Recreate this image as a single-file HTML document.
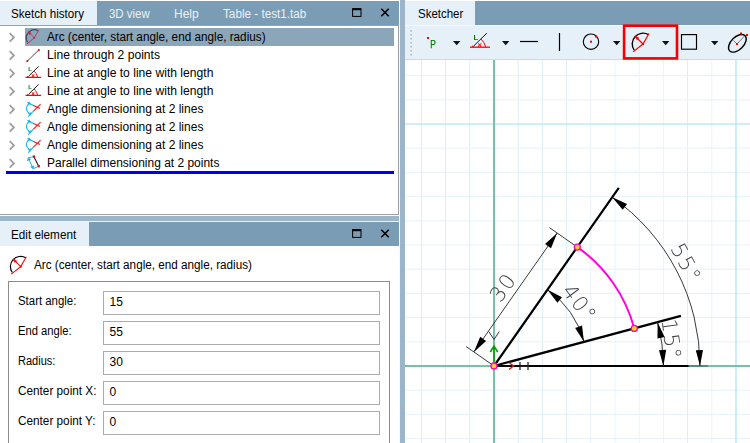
<!DOCTYPE html>
<html><head><meta charset="utf-8"><title>Sketcher</title>
<style>
html,body{margin:0;padding:0;}
body{width:750px;height:443px;overflow:hidden;position:relative;background:#fff;font-family:"Liberation Sans",sans-serif;font-size:12px;color:#000;}
.abs{position:absolute;}
.t{position:absolute;white-space:nowrap;line-height:14px;transform-origin:0 0;}
svg{position:absolute;left:0;top:0;overflow:visible;will-change:transform}
.inp{position:absolute;left:103px;width:277px;height:24px;box-sizing:border-box;border:1px solid #ababab;background:#fff}
</style></head><body>
<div class="abs" style="left:0;top:0;width:405px;height:443px;background:#9db5c8"></div>
<div class="abs" style="left:0;top:0;width:399px;height:25px;background:#7a9cb4"></div>
<div class="abs" style="left:0;top:0;width:399px;height:1px;background:#fdfeff"></div>
<div class="abs" style="left:0;top:1px;width:97px;height:24px;background:#e6f0f9"></div>
<div class="abs" style="left:0;top:25px;width:399px;height:190px;background:#fff;box-sizing:border-box;border-right:1px solid #a0a0a0;border-bottom:1px solid #a0a0a0;border-top:1px solid #a0a0a0"></div>
<div class="abs" style="left:25px;top:28px;width:369px;height:18px;background:#8ba5b9"></div>
<div class="abs" style="left:6px;top:171px;width:388px;height:3px;background:#0000e6"></div>
<div class="t" style="left:11px;top:6.5px;color:#000;font-size:12px;transform:scaleX(0.9682);">Sketch history</div>
<div class="t" style="left:109.3px;top:6.5px;color:#eaf1f6;font-size:12px;transform:scaleX(0.9532);">3D view</div>
<div class="t" style="left:174px;top:6.5px;color:#eaf1f6;font-size:12px;">Help</div>
<div class="t" style="left:223.3px;top:6.5px;color:#eaf1f6;font-size:12px;transform:scaleX(0.9766);">Table - test1.tab</div>
<div class="t" style="left:47.0px;top:30.0px;color:#000;font-size:12px;transform:scaleX(0.9781);">Arc (center, start angle, end angle, radius)</div>
<div class="t" style="left:47.0px;top:48.0px;color:#000;font-size:12px;transform:scaleX(1.0080);">Line through 2 points</div>
<div class="t" style="left:47.0px;top:66.0px;color:#000;font-size:12px;transform:scaleX(1.0097);">Line at angle to line with length</div>
<div class="t" style="left:47.0px;top:84.0px;color:#000;font-size:12px;transform:scaleX(1.0097);">Line at angle to line with length</div>
<div class="t" style="left:47.0px;top:102.0px;color:#000;font-size:12px;transform:scaleX(1.0019);">Angle dimensioning at 2 lines</div>
<div class="t" style="left:47.0px;top:120.0px;color:#000;font-size:12px;transform:scaleX(1.0019);">Angle dimensioning at 2 lines</div>
<div class="t" style="left:47.0px;top:138.0px;color:#000;font-size:12px;transform:scaleX(1.0019);">Angle dimensioning at 2 lines</div>
<div class="t" style="left:47.0px;top:156.0px;color:#000;font-size:12px;transform:scaleX(0.9977);">Parallel dimensioning at 2 points</div>
<div class="abs" style="left:0;top:221px;width:399px;height:1px;background:#eef3f7"></div>
<div class="abs" style="left:0;top:222px;width:399px;height:24px;background:#7a9cb4"></div>
<div class="abs" style="left:0;top:222px;width:89px;height:24px;background:#e6f0f9"></div>
<div class="abs" style="left:0;top:246px;width:399px;height:197px;background:#fff"></div>
<div class="abs" style="left:8px;top:281px;width:382px;height:170px;box-sizing:border-box;border:1px solid #8c8c8c"></div>
<div class="t" style="left:11px;top:227.5px;color:#000;font-size:12px;transform:scaleX(0.9775);">Edit element</div>
<div class="t" style="left:34.3px;top:257.5px;color:#000;font-size:12px;transform:scaleX(0.9754);">Arc (center, start angle, end angle, radius)</div>
<div class="inp" style="top:291px"></div>
<div class="t" style="left:18.3px;top:293.6px;color:#000;font-size:12px;transform:scaleX(0.9511);">Start angle:</div>
<div class="t" style="left:109.6px;top:295.4px;color:#000;font-size:12px;">15</div>
<div class="inp" style="top:321px"></div>
<div class="t" style="left:18.3px;top:323.6px;color:#000;font-size:12px;transform:scaleX(0.9355);">End angle:</div>
<div class="t" style="left:109.6px;top:325.4px;color:#000;font-size:12px;">55</div>
<div class="inp" style="top:351px"></div>
<div class="t" style="left:18.3px;top:353.6px;color:#000;font-size:12px;transform:scaleX(0.9189);">Radius:</div>
<div class="t" style="left:109.6px;top:355.4px;color:#000;font-size:12px;">30</div>
<div class="inp" style="top:381px"></div>
<div class="t" style="left:18.3px;top:383.6px;color:#000;font-size:12px;transform:scaleX(0.9800);">Center point X:</div>
<div class="t" style="left:109.6px;top:385.4px;color:#000;font-size:12px;">0</div>
<div class="inp" style="top:411px"></div>
<div class="t" style="left:18.3px;top:413.6px;color:#000;font-size:12px;transform:scaleX(0.9800);">Center point Y:</div>
<div class="t" style="left:109.6px;top:415.4px;color:#000;font-size:12px;">0</div>
<div class="abs" style="left:399px;top:0;width:1px;height:443px;background:#f6f9fc"></div>
<div class="abs" style="left:0;top:215px;width:400px;height:1px;background:#f6f9fc"></div>
<div class="abs" style="left:405px;top:0;width:345px;height:443px;background:#fff"></div>
<div class="abs" style="left:405px;top:0;width:345px;height:25px;background:#7a9cb4"></div>
<div class="abs" style="left:405px;top:0;width:345px;height:1px;background:#fdfeff"></div>
<div class="abs" style="left:405px;top:1px;width:70px;height:24px;background:#e6f0f9"></div>
<div class="abs" style="left:405px;top:25px;width:345px;height:35px;background:#e6f0f9;box-sizing:border-box;border-bottom:1px solid #cfd9e2"></div>
<div class="abs" style="left:405px;top:25px;width:345px;height:1px;background:#f3f8fc"></div>
<div class="t" style="left:417.7px;top:6.5px;color:#000;font-size:12px;transform:scaleX(0.9557);">Sketcher</div>
<svg width="750" height="443" viewBox="0 0 750 443">
<rect x="352.6" y="8.6" width="8.4" height="7.8" fill="none" stroke="#000" stroke-width="1"/><rect x="352.6" y="8.6" width="8.4" height="1.6" fill="#000"/>
<path d="M381.3 8.8L388.7 16.2M388.7 8.8L381.3 16.2" stroke="#000" stroke-width="1.6" fill="none"/>
<rect x="352.6" y="229.6" width="8.4" height="7.8" fill="none" stroke="#000" stroke-width="1"/><rect x="352.6" y="229.6" width="8.4" height="1.6" fill="#000"/>
<path d="M381.3 229.8L388.7 237.2M388.7 229.8L381.3 237.2" stroke="#000" stroke-width="1.6" fill="none"/>
<path d="M9.7 33.199999999999996L13.9 37.4L9.7 41.6" stroke="#a0a0a0" stroke-width="1.9" fill="none"/>
<path d="M9.7 51.199999999999996L13.9 55.4L9.7 59.6" stroke="#a0a0a0" stroke-width="1.9" fill="none"/>
<path d="M9.7 69.2L13.9 73.4L9.7 77.60000000000001" stroke="#a0a0a0" stroke-width="1.9" fill="none"/>
<path d="M9.7 87.2L13.9 91.4L9.7 95.60000000000001" stroke="#a0a0a0" stroke-width="1.9" fill="none"/>
<path d="M9.7 105.2L13.9 109.4L9.7 113.60000000000001" stroke="#a0a0a0" stroke-width="1.9" fill="none"/>
<path d="M9.7 123.2L13.9 127.4L9.7 131.6" stroke="#a0a0a0" stroke-width="1.9" fill="none"/>
<path d="M9.7 141.20000000000002L13.9 145.4L9.7 149.6" stroke="#a0a0a0" stroke-width="1.9" fill="none"/>
<path d="M9.7 159.20000000000002L13.9 163.4L9.7 167.6" stroke="#a0a0a0" stroke-width="1.9" fill="none"/>
<clipPath id="cv"><rect x="405" y="60" width="345" height="383"/></clipPath>
<g clip-path="url(#cv)">
<line x1="397.2" y1="60" x2="397.2" y2="443" stroke="#e9f4fa" stroke-width="1"/>
<line x1="421.4" y1="60" x2="421.4" y2="443" stroke="#ddeef7" stroke-width="1"/>
<line x1="445.6" y1="60" x2="445.6" y2="443" stroke="#ddeef7" stroke-width="1"/>
<line x1="469.8" y1="60" x2="469.8" y2="443" stroke="#ddeef7" stroke-width="1"/>
<line x1="518.2" y1="60" x2="518.2" y2="443" stroke="#ddeef7" stroke-width="1"/>
<line x1="542.4" y1="60" x2="542.4" y2="443" stroke="#ddeef7" stroke-width="1"/>
<line x1="566.6" y1="60" x2="566.6" y2="443" stroke="#ddeef7" stroke-width="1"/>
<line x1="590.8" y1="60" x2="590.8" y2="443" stroke="#e9f4fa" stroke-width="1"/>
<line x1="615.0" y1="60" x2="615.0" y2="443" stroke="#e9f4fa" stroke-width="1"/>
<line x1="639.2" y1="60" x2="639.2" y2="443" stroke="#e9f4fa" stroke-width="1"/>
<line x1="663.4" y1="60" x2="663.4" y2="443" stroke="#e9f4fa" stroke-width="1"/>
<line x1="687.6" y1="60" x2="687.6" y2="443" stroke="#ddeef7" stroke-width="1"/>
<line x1="711.8" y1="60" x2="711.8" y2="443" stroke="#e9f4fa" stroke-width="1"/>
<line x1="405" y1="462.8" x2="750" y2="462.8" stroke="#e6f2f9" stroke-width="1"/>
<line x1="405" y1="438.6" x2="750" y2="438.6" stroke="#e6f2f9" stroke-width="1"/>
<line x1="405" y1="414.4" x2="750" y2="414.4" stroke="#e6f2f9" stroke-width="1"/>
<line x1="405" y1="390.2" x2="750" y2="390.2" stroke="#e6f2f9" stroke-width="1"/>
<line x1="405" y1="341.8" x2="750" y2="341.8" stroke="#e6f2f9" stroke-width="1"/>
<line x1="405" y1="317.6" x2="750" y2="317.6" stroke="#e6f2f9" stroke-width="1"/>
<line x1="405" y1="293.4" x2="750" y2="293.4" stroke="#e6f2f9" stroke-width="1"/>
<line x1="405" y1="269.2" x2="750" y2="269.2" stroke="#e6f2f9" stroke-width="1"/>
<line x1="405" y1="245.0" x2="750" y2="245.0" stroke="#e6f2f9" stroke-width="1"/>
<line x1="405" y1="220.8" x2="750" y2="220.8" stroke="#e6f2f9" stroke-width="1"/>
<line x1="405" y1="196.6" x2="750" y2="196.6" stroke="#e6f2f9" stroke-width="1"/>
<line x1="405" y1="172.4" x2="750" y2="172.4" stroke="#e6f2f9" stroke-width="1"/>
<line x1="405" y1="148.2" x2="750" y2="148.2" stroke="#e6f2f9" stroke-width="1"/>
<line x1="405" y1="99.8" x2="750" y2="99.8" stroke="#e6f2f9" stroke-width="1"/>
<line x1="405" y1="75.6" x2="750" y2="75.6" stroke="#e6f2f9" stroke-width="1"/>
<line x1="405" y1="124" x2="750" y2="124" stroke="#bfe9f8" stroke-width="1.6"/>
<line x1="736" y1="60" x2="736" y2="443" stroke="#bfe9f8" stroke-width="1.6"/>
<line x1="494.0" y1="60" x2="494.0" y2="443" stroke="#6fc6a6" stroke-width="2"/>
<line x1="405" y1="366.0" x2="750" y2="366.0" stroke="#6fc6a6" stroke-width="2"/>
<line x1="688" y1="366.0" x2="708" y2="366.0" stroke="#2a5a4a" stroke-width="1"/>
<line x1="494.0" y1="366.0" x2="688.5" y2="366.0" stroke="#000" stroke-width="2.2"/>
<line x1="494.0" y1="366.0" x2="680.9" y2="315.9" stroke="#000" stroke-width="2.2"/>
<line x1="494.0" y1="366.0" x2="618.8" y2="187.8" stroke="#000" stroke-width="2.2"/>
<path d="M634.3 328.4A145.2 145.2 0 0 0 577.3 247.1" stroke="#ff00e0" stroke-width="2" fill="none"/>
<path d="M700.0 366.0A206 206 0 0 0 612.2 197.3" stroke="#222" stroke-width="0.9" fill="none"/>
<polygon points="700.0,366.0 695.8,350.2 703.0,349.9" fill="#000"/>
<polygon points="612.2,197.3 627.1,204.1 622.7,209.8" fill="#000"/>
<path d="M663.4 366.0A169.4 169.4 0 0 0 657.6 322.2" stroke="#222" stroke-width="0.9" fill="none"/>
<polygon points="663.4,366.0 659.0,350.2 666.2,349.8" fill="#000"/>
<polygon points="657.6,322.2 664.6,337.0 657.5,338.6" fill="#000"/>
<path d="M584.0 341.9A93.2 93.2 0 0 0 547.5 289.7" stroke="#222" stroke-width="0.9" fill="none"/>
<polygon points="584.0,341.9 575.2,328.1 582.0,325.6" fill="#000"/>
<polygon points="547.5,289.7 562.0,297.2 557.4,302.7" fill="#000"/>
<line x1="494.0" y1="366.0" x2="466.1" y2="346.5" stroke="#222" stroke-width="0.9"/>
<line x1="577.3" y1="247.1" x2="549.4" y2="227.6" stroke="#222" stroke-width="0.9"/>
<line x1="473.9" y1="351.9" x2="557.2" y2="233.0" stroke="#222" stroke-width="0.9"/>
<polygon points="473.9,351.9 480.2,336.8 486.1,340.9" fill="#000"/>
<polygon points="557.2,233.0 551.0,248.2 545.1,244.0" fill="#000"/>
<text x="0" y="7.7" transform="translate(502.7 287.0) rotate(-55)" text-anchor="middle" letter-spacing="1.5" font-family="'DejaVu Sans Light','DejaVu Sans',sans-serif" font-weight="200" font-size="21" fill="#444">30</text>
<text x="0" y="7.7" transform="translate(580.0 303.0) rotate(53)" text-anchor="middle" letter-spacing="1.5" font-family="'DejaVu Sans Light','DejaVu Sans',sans-serif" font-weight="200" font-size="21" fill="#444">40°</text>
<text x="0" y="7.7" transform="translate(686.5 262.7) rotate(62)" text-anchor="middle" letter-spacing="1.5" font-family="'DejaVu Sans Light','DejaVu Sans',sans-serif" font-weight="200" font-size="21" fill="#444">55°</text>
<text x="0" y="7.7" transform="translate(672.0 339.5) rotate(82)" text-anchor="middle" letter-spacing="1.5" font-family="'DejaVu Sans Light','DejaVu Sans',sans-serif" font-weight="200" font-size="21" fill="#444">15°</text>
<path d="M494.0 362.0V346.0M490.3 352.0L494.0 346.0L497.7 352.0" stroke="#00a000" stroke-width="1.6" fill="none"/>
<path d="M488.7 331.5L494.0 339.5L499.3 331.5" stroke="#333" stroke-width="1" fill="none"/>
<path d="M509.0 362.5L513.5 366.0L509.0 369.5" stroke="#d02020" stroke-width="1.4" fill="none"/>
<path d="M520.0 362.0V370.0M528.0 362.0V370.0M520.0 366.0H528.0" stroke="#222" stroke-width="1.25" fill="none"/>
<circle cx="494.0" cy="366.0" r="3" fill="#f4d21c" stroke="#ff00c8" stroke-width="1.3"/>
<circle cx="634.3" cy="328.4" r="3" fill="#f4d21c" stroke="#ff00c8" stroke-width="1.3"/>
<circle cx="577.3" cy="247.1" r="3" fill="#f4d21c" stroke="#ff00c8" stroke-width="1.3"/>
</g>
<rect x="410.3" y="30" width="1.6" height="1.6" fill="#b0bac4"/>
<rect x="410.3" y="34" width="1.6" height="1.6" fill="#b0bac4"/>
<rect x="410.3" y="38" width="1.6" height="1.6" fill="#b0bac4"/>
<rect x="410.3" y="42" width="1.6" height="1.6" fill="#b0bac4"/>
<rect x="410.3" y="46" width="1.6" height="1.6" fill="#b0bac4"/>
<rect x="410.3" y="50" width="1.6" height="1.6" fill="#b0bac4"/>
<rect x="410.3" y="54" width="1.6" height="1.6" fill="#b0bac4"/>
<polygon points="453,41 460.4,41 456.7,45.2" fill="#111"/>
<polygon points="502,41 509.4,41 505.7,45.2" fill="#111"/>
<polygon points="613,41 620.4,41 616.7,45.2" fill="#111"/>
<polygon points="662,41 669.4,41 665.7,45.2" fill="#111"/>
<polygon points="711,41 718.4,41 714.7,45.2" fill="#111"/>
<rect x="427" y="37" width="2" height="2" fill="#f00"/>
<text x="430.3" y="48" style="opacity:.999" font-family="'Liberation Sans',sans-serif" font-size="10.2" textLength="5.6" lengthAdjust="spacingAndGlyphs" fill="#008000" stroke="#008000" stroke-width="0.25">P</text>
<g transform="translate(470 33) scale(1.0)"><text x="3.4" y="6.6" style="opacity:.999" font-family="'Liberation Sans',sans-serif" font-size="7.6" font-weight="bold" fill="#008000">L</text><path d="M3.9 12.8L16.9 0.1" stroke="#111" stroke-width="1.0" fill="none"/><path d="M0 14.2H20" stroke="#f00" stroke-width="1.3" fill="none"/><path d="M11.2 6.1Q14.2 9 15.7 14M8 10.6Q10.2 10.8 11 14M8.4 14Q9 10.9 11.4 10.7M2 14L3 12.7L4 14" stroke="#f00" stroke-width="1.0" fill="none"/></g>
<path d="M520 41.5H538" stroke="#000" stroke-width="1.2"/><path d="M559.5 33V51" stroke="#000" stroke-width="1.2"/>
<circle cx="591" cy="41.7" r="7.7" fill="none" stroke="#000" stroke-width="1.1"/><rect x="590" y="40.7" width="2" height="2" fill="#f00"/><rect x="595" y="35.5" width="2" height="2" fill="#f00"/>
<rect x="624.1" y="25.7" width="52.9" height="32.7" fill="none" stroke="#f40000" stroke-width="2.6"/>
<polygon points="635.2,36.2 639.3,37.8 636.8,40.3" fill="#f00"/><path d="M648.4 34.6A10.8 10.8 0 0 0 634.2 50.2" stroke="#000" stroke-width="1.35" fill="none"/><path d="M649.0 33.5L643 44L633.1 51.9M643 44L635.7 36.7" stroke="#f00" stroke-width="1.215" fill="none"/><rect x="642.0" y="43.0" width="2.0" height="2.0" fill="#f00"/><rect x="634.7" y="35.7" width="2.0" height="2.0" fill="#f00"/>
<rect x="681.5" y="34.6" width="15" height="14.6" fill="none" stroke="#000" stroke-width="1.15"/>
<g transform="translate(737.4 43.3) rotate(-45)"><ellipse cx="0" cy="0" rx="10.8" ry="6.3" fill="none" stroke="#000" stroke-width="1.4"/></g>
<path d="M737 44L745 35.5M737 44L733.5 40.5" stroke="#444" stroke-width="0.7"/><rect x="736" y="43" width="2" height="2" fill="#f00"/><rect x="740" y="32.5" width="2" height="2" fill="#f00"/><rect x="746" y="34" width="2" height="2" fill="#f00"/>
<polygon points="28.3,31.8 31.5,33.1 29.6,35.0" fill="#d21a48"/><path d="M38.3 30.8A8.1 8.1 0 0 0 27.7 42.4" stroke="#3a4e6a" stroke-width="1.3" fill="none"/><path d="M38.8 29.9L34.3 37.8L26.9 44.0M34.3 37.8L28.9 32.4" stroke="#d21a48" stroke-width="0.8" fill="none"/><rect x="33.5" y="37.0" width="1.6" height="1.6" fill="#d21a48"/><rect x="28.1" y="31.6" width="1.6" height="1.6" fill="#d21a48"/>
<path d="M27.3 61.1L38.8 50" stroke="#333" stroke-width="0.9"/><rect x="26.4" y="60.2" width="1.8" height="1.8" fill="#f00"/><rect x="37.9" y="49.1" width="1.8" height="1.8" fill="#f00"/>
<g transform="translate(25.5 66.3) scale(0.78)"><text x="3.4" y="6.6" style="opacity:.999" font-family="'Liberation Sans',sans-serif" font-size="7.6" font-weight="bold" fill="#008000">L</text><path d="M3.9 12.8L16.9 0.1" stroke="#111" stroke-width="1.2" fill="none"/><path d="M0 14.2H20" stroke="#f00" stroke-width="1.56" fill="none"/><path d="M11.2 6.1Q14.2 9 15.7 14M8 10.6Q10.2 10.8 11 14M8.4 14Q9 10.9 11.4 10.7M2 14L3 12.7L4 14" stroke="#f00" stroke-width="1.2" fill="none"/></g>
<g transform="translate(25.5 84.3) scale(0.78)"><text x="3.4" y="6.6" style="opacity:.999" font-family="'Liberation Sans',sans-serif" font-size="7.6" font-weight="bold" fill="#008000">L</text><path d="M3.9 12.8L16.9 0.1" stroke="#111" stroke-width="1.2" fill="none"/><path d="M0 14.2H20" stroke="#f00" stroke-width="1.56" fill="none"/><path d="M11.2 6.1Q14.2 9 15.7 14M8 10.6Q10.2 10.8 11 14M8.4 14Q9 10.9 11.4 10.7M2 14L3 12.7L4 14" stroke="#f00" stroke-width="1.2" fill="none"/></g>
<path d="M33 105.3L40 108.6M33.2 111.4L40.6 104.2" stroke="#ee1c24" stroke-width="1.1" fill="none"/><path d="M27.5 102.2L33 105.3M28.2 116.7L33.2 111.4M28.6 103.8Q24 108.7 29.2 113.6" stroke="#1eb4ea" stroke-width="1.1" fill="none"/><path d="M27.3 104.4L29.2 101.4L31.5 104.8ZM27.6 113.6L31.2 112.2L30.6 115.6Z" fill="#1eb4ea"/>
<path d="M33 123.3L40 126.6M33.2 129.4L40.6 122.2" stroke="#ee1c24" stroke-width="1.1" fill="none"/><path d="M27.5 120.2L33 123.3M28.2 134.7L33.2 129.4M28.6 121.8Q24 126.7 29.2 131.6" stroke="#1eb4ea" stroke-width="1.1" fill="none"/><path d="M27.3 122.4L29.2 119.4L31.5 122.8ZM27.6 131.6L31.2 130.2L30.6 133.6Z" fill="#1eb4ea"/>
<path d="M33 141.3L40 144.6M33.2 147.4L40.6 140.2" stroke="#ee1c24" stroke-width="1.1" fill="none"/><path d="M27.5 138.2L33 141.3M28.2 152.7L33.2 147.4M28.6 139.8Q24 144.7 29.2 149.6" stroke="#1eb4ea" stroke-width="1.1" fill="none"/><path d="M27.3 140.4L29.2 137.4L31.5 140.8ZM27.6 149.6L31.2 148.2L30.6 151.6Z" fill="#1eb4ea"/>
<path d="M33.8 156.5L38.7 166.2" stroke="#222" stroke-width="1.1"/><path d="M33.8 156.5L28.2 158M38.7 166.2L33.2 168.7M28.6 158.5L32.8 168" stroke="#1eb4ea" stroke-width="1" fill="none"/><path d="M26.8 161L28.2 157L31.2 159.8ZM30.2 166.8L34.2 165.6L33.4 169.4Z" fill="#1eb4ea"/><rect x="32.8" y="155.4" width="2.2" height="2.2" fill="#f00"/><rect x="37.7" y="165.1" width="2.2" height="2.2" fill="#f00"/>
<polygon points="13.3,259.2 17.2,260.7 14.8,263.1" fill="#f00"/><path d="M25.8 257.8A10.2 10.2 0 0 0 12.3 272.5" stroke="#000" stroke-width="1.15" fill="none"/><path d="M26.4 256.7L20.7 266.6L11.3 274.2M20.7 266.6L13.8 259.7" stroke="#f00" stroke-width="1.035" fill="none"/><rect x="19.7" y="265.6" width="2.0" height="2.0" fill="#f00"/><rect x="12.8" y="258.7" width="2.0" height="2.0" fill="#f00"/>
</svg>
</body></html>
